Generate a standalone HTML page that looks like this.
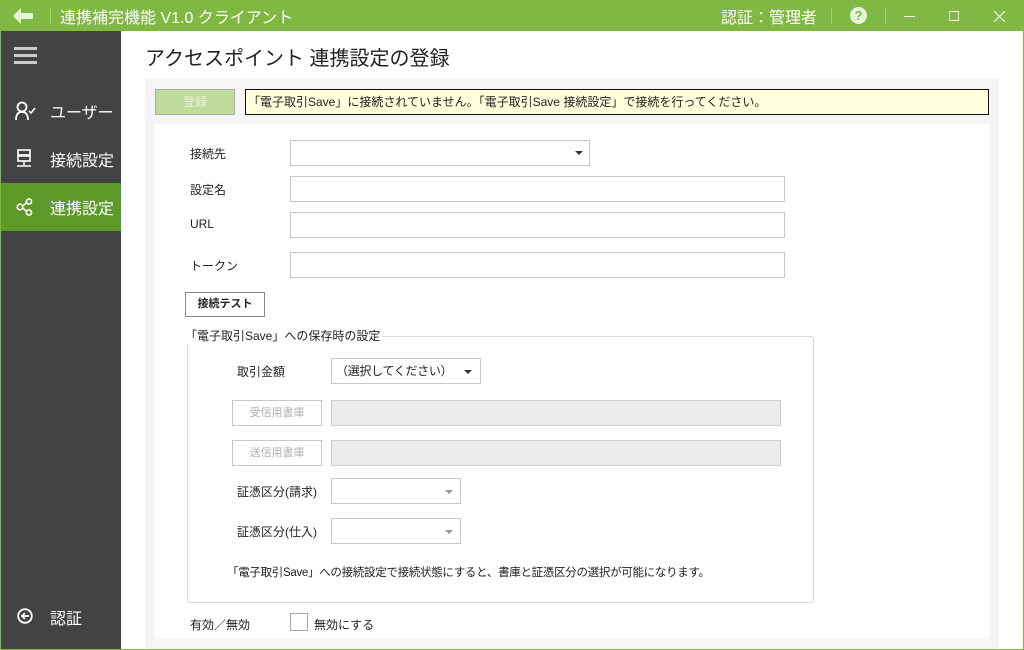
<!DOCTYPE html>
<html><head><meta charset="utf-8"><style>
*{margin:0;padding:0;box-sizing:border-box}
body{width:1024px;height:650px;overflow:hidden;background:#7fb843;font-family:"Liberation Sans","Noto Sans CJK JP",sans-serif;position:relative;color:#222}
.a{position:absolute}
.tb{left:0;top:0;width:1024px;height:31px;background:#7fb843;color:#fff}
.side{left:1px;top:31px;width:120px;height:618px;background:#434343;color:#fff}
.main{left:121px;top:31px;width:902px;height:618px;background:#fff}
.nav{position:absolute;left:0;width:120px;height:48px;font-size:16px}
.nav span{position:absolute;left:49px;top:12px}
.inp{position:absolute;background:#fff;border:1px solid #c8c8c8}
.lbl{position:absolute;font-size:12px}
.dis{position:absolute;background:#ececec;border:1px solid #cfcfcf}
.dbtn{position:absolute;border:1px solid #c8c8c8;background:#fff;color:#b0b0b0;font-size:11px;text-align:center;line-height:24px}
.arr{position:absolute;width:0;height:0;border-left:4px solid transparent;border-right:4px solid transparent;border-top:4px solid #333}
</style></head><body>
<div class="a tb">
 <svg class="a" style="left:13px;top:8px" width="22" height="16" viewBox="0 0 22 16"><path d="M0 8 L8 0 V5 H20 V11 H8 V16 Z" fill="#e8f3dc"/></svg>
 <div class="a" style="left:50px;top:8px;width:1px;height:16px;background:#a9d27d"></div>
 <div class="a" style="left:60px;top:4px;font-size:16px;color:#fff">連携補完機能 V1.0 クライアント</div>
 <div class="a" style="left:721px;top:4px;font-size:16px">認証：管理者</div>
 <div class="a" style="left:831px;top:8px;width:1px;height:16px;background:#a9d27d"></div>
 <div class="a" style="left:850px;top:7px;width:17px;height:17px;border-radius:50%;background:#e8f3dc;color:#7fb843;font-size:13px;font-weight:bold;text-align:center;line-height:17px">?</div>
 <div class="a" style="left:885px;top:8px;width:1px;height:16px;background:#a9d27d"></div>
 <div class="a" style="left:904px;top:16px;width:11px;height:1px;background:#fff"></div>
 <div class="a" style="left:949px;top:11px;width:10px;height:10px;border:1px solid #fff"></div>
 <svg class="a" style="left:994px;top:11px" width="11" height="11"><path d="M0 0L11 11M11 0L0 11" stroke="#fff" stroke-width="1"/></svg>
</div>
<div class="a side">
 <div class="a" style="left:13px;top:16px;width:23px;height:3px;background:#ccc"></div>
 <div class="a" style="left:13px;top:23px;width:23px;height:3px;background:#ccc"></div>
 <div class="a" style="left:13px;top:30px;width:23px;height:3px;background:#ccc"></div>
 <div class="nav" style="top:56px"><svg class="a" style="left:14px;top:14px" width="22" height="20"><circle cx="7" cy="6" r="4.5" fill="none" stroke="#fff" stroke-width="1.8"/><path d="M1 19 Q1 11 7 11 Q13 11 13 19" fill="none" stroke="#fff" stroke-width="1.8"/><path d="M14 10 L16 12 L20 7" fill="none" stroke="#fff" stroke-width="1.5"/></svg><span>ユーザー</span></div>
 <div class="nav" style="top:104px"><svg class="a" style="left:15px;top:14px" width="18" height="20"><rect x="2" y="1" width="12" height="5" fill="none" stroke="#fff" stroke-width="1.6"/><rect x="2" y="7" width="12" height="5" fill="none" stroke="#fff" stroke-width="1.6"/><path d="M8 12V16M1 17H15" stroke="#fff" stroke-width="1.6"/></svg><span>接続設定</span></div>
 <div class="nav" style="top:152px;background:#5e9a2a"><svg class="a" style="left:15px;top:15px" width="18" height="18"><circle cx="4" cy="9" r="2.8" fill="none" stroke="#fff" stroke-width="1.6"/><circle cx="13" cy="3.5" r="2.6" fill="none" stroke="#fff" stroke-width="1.6"/><circle cx="13" cy="14.5" r="2.6" fill="none" stroke="#fff" stroke-width="1.6"/><path d="M6.5 8L10.6 4.8M6.5 10L10.6 13.2" stroke="#fff" stroke-width="1.6"/></svg><span>連携設定</span></div>
 <div class="nav" style="top:562px"><svg class="a" style="left:16px;top:15px" width="18" height="18"><circle cx="8" cy="8" r="6.8" fill="none" stroke="#fff" stroke-width="1.8"/><path d="M12 8H5M8 5L5 8L8 11" fill="none" stroke="#fff" stroke-width="1.8"/></svg><span>認証</span></div>
</div>
<div class="a main">
 <div class="a" style="left:24px;top:11px;font-size:20px;color:#222">アクセスポイント 連携設定の登録</div>
 <div class="a" style="left:24px;top:48px;width:854px;height:570px;background:#f5f5f5"></div>
 <div class="a" style="left:34px;top:58px;width:80px;height:26px;background:#bfdb9b;border:1px solid #aaa;color:#e6f2d8;font-size:12px;text-align:center;line-height:24px">登録</div>
 <div class="a" style="left:124px;top:58px;width:744px;height:26px;background:#ffffdd;border:1px solid #111;font-size:12px;line-height:24px;padding-left:2px">「電子取引Save」に接続されていません。「電子取引Save 接続設定」で接続を行ってください。</div>
 <div class="a" style="left:34px;top:93px;width:834px;height:515px;background:#fff"></div>

 <div class="lbl" style="left:69px;top:114px">接続先</div>
 <div class="inp" style="left:169px;top:109px;width:300px;height:26px"></div><div class="arr" style="left:454px;top:120px"></div>
 <div class="lbl" style="left:69px;top:150px">設定名</div>
 <div class="inp" style="left:169px;top:145px;width:495px;height:26px"></div>
 <div class="lbl" style="left:69px;top:186px">URL</div>
 <div class="inp" style="left:169px;top:181px;width:495px;height:26px"></div>
 <div class="lbl" style="left:69px;top:226px">トークン</div>
 <div class="inp" style="left:169px;top:221px;width:495px;height:26px"></div>
 <div class="a" style="left:64px;top:261px;width:80px;height:25px;border:1px solid #888;background:#fff;font-size:11px;text-align:center;line-height:23px;font-weight:bold">接続テスト</div>

 <div class="a" style="left:66px;top:305px;width:627px;height:267px;border:1px solid #d3dbe0;border-radius:3px"></div>
 <div class="a" style="left:62px;top:296px;background:#fff;padding:0 2px;font-size:12px">「電子取引Save」への保存時の設定</div>
 <div class="lbl" style="left:116px;top:332px">取引金額</div>
 <div class="inp" style="left:210px;top:327px;width:150px;height:26px;font-size:12px;line-height:24px;padding-left:4px;letter-spacing:-0.3px">（選択してください）</div><div class="arr" style="left:343px;top:339px"></div>
 <div class="dbtn" style="left:111px;top:369px;width:90px;height:26px">受信用書庫</div>
 <div class="dis" style="left:210px;top:369px;width:450px;height:26px"></div>
 <div class="dbtn" style="left:111px;top:409px;width:90px;height:26px">送信用書庫</div>
 <div class="dis" style="left:210px;top:409px;width:450px;height:26px"></div>
 <div class="lbl" style="left:116px;top:452px">証憑区分(請求)</div>
 <div class="inp" style="left:210px;top:447px;width:130px;height:26px"></div><div class="arr" style="left:324px;top:459px;border-top-color:#999"></div>
 <div class="lbl" style="left:116px;top:492px">証憑区分(仕入)</div>
 <div class="inp" style="left:210px;top:487px;width:130px;height:26px"></div><div class="arr" style="left:324px;top:499px;border-top-color:#999"></div>
 <div class="lbl" style="left:106px;top:533px;font-size:11.5px;letter-spacing:-0.3px">「電子取引Save」への接続設定で接続状態にすると、書庫と証憑区分の選択が可能になります。</div>

 <div class="lbl" style="left:69px;top:585px">有効／無効</div>
 <div class="a" style="left:169px;top:582px;width:18px;height:18px;border:1px solid #aaa;background:#fff"></div>
 <div class="lbl" style="left:193px;top:585px">無効にする</div>
</div>
</body></html>
